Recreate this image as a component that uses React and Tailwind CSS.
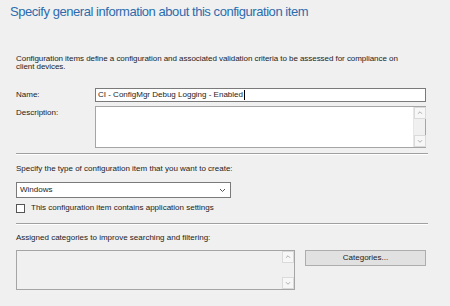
export default function App() {
  return (
    <div className="w-[450px] h-[306px] overflow-hidden bg-[#f0f0f0] font-['Liberation_Sans',Arial,sans-serif] text-[#1c1c1c]">
      {/* Header */}
      <div className="pl-[10px] pt-[4px] h-[52px]">
        <h1 className="text-[13px] leading-[16px] text-[#2c6cae] tracking-[-0.45px]">
          Specify general information about this configuration item
        </h1>
      </div>

      <div className="pl-[16px] pr-[24px]">
        <p className="text-[8px] leading-[8px] tracking-[-0.05px] pt-[3px]">
          Configuration items define a configuration and associated validation criteria to be assessed for compliance on
          <br />
          client devices.
        </p>

        {/* Name */}
        <div className="flex items-center mt-[17px] h-[14px]">
          <span className="w-[79px] text-[8px]">Name:</span>
          <div className="flex-1 h-[14px] bg-white border border-[#7a7a7a] flex items-center px-[2px] text-[8px]">
            CI - ConfigMgr Debug Logging - Enabled
            <span className="w-px h-[10px] bg-black ml-[1px]" />
          </div>
        </div>

        {/* Description */}
        <div className="flex items-start mt-[4px]">
          <span className="w-[79px] text-[8px] pt-[1px]">Description:</span>
          <div className="flex-1 h-[42px] bg-white border border-[#a5a5a5] flex justify-end">
            <div className="w-[12px] h-full bg-[#f0f0f0] border-l border-[#e6e6e6] flex flex-col justify-between items-center">
              <svg width="12" height="12" viewBox="0 0 12 12" className="border border-[#dadada] bg-[#f7f7f7]">
                <path d="M3.5 7 L6 4.5 L8.5 7" fill="none" stroke="#8a8a8a" strokeWidth="0.8" />
              </svg>
              <svg width="12" height="12" viewBox="0 0 12 12" className="border border-[#dadada] bg-[#f7f7f7]">
                <path d="M3.5 5 L6 7.5 L8.5 5" fill="none" stroke="#8a8a8a" strokeWidth="0.8" />
              </svg>
            </div>
          </div>
        </div>

        <div className="mt-[5px] mr-[-2px] border-t border-[#a0a0a0] border-b border-b-white" />

        {/* Type */}
        <p className="text-[8px] leading-[8px] mt-[10px]">Specify the type of configuration item that you want to create:</p>
        <div className="mt-[9px] w-[215px] h-[16px] bg-white border border-[#7a7a7a] flex items-center justify-between pl-[3px] pr-[4px] text-[8px]">
          <span>Windows</span>
          <svg width="7" height="5" viewBox="0 0 7 5">
            <path d="M1 1 L3.5 3.5 L6 1" fill="none" stroke="#555" strokeWidth="1" />
          </svg>
        </div>
        <div className="flex items-center mt-[5px] h-[10px]">
          <div className="w-[9px] h-[9px] bg-white border border-[#555]" />
          <span className="ml-[6px] text-[8px]">This configuration item contains application settings</span>
        </div>

        <div className="mt-[10px] mr-[-2px] border-t border-[#a0a0a0] border-b border-b-white" />

        {/* Categories */}
        <p className="text-[8px] leading-[8px] mt-[9px]">Assigned categories to improve searching and filtering:</p>
        <div className="flex items-start mt-[8px]">
          <div className="w-[279px] h-[40px] bg-[#f0f0f0] border border-[#a5a5a5] flex justify-end">
            <div className="w-[12px] h-full bg-[#f0f0f0] flex flex-col justify-between">
              <svg width="12" height="12" viewBox="0 0 12 12" className="border border-[#dadada] bg-[#f7f7f7]">
                <path d="M3.5 7 L6 4.5 L8.5 7" fill="none" stroke="#8a8a8a" strokeWidth="0.8" />
              </svg>
              <svg width="12" height="12" viewBox="0 0 12 12" className="border border-[#dadada] bg-[#f7f7f7]">
                <path d="M3.5 5 L6 7.5 L8.5 5" fill="none" stroke="#8a8a8a" strokeWidth="0.8" />
              </svg>
            </div>
          </div>
          <button className="ml-[10px] flex-1 h-[16px] bg-[#e1e1e1] border border-[#adadad] text-[8px] leading-[14px] text-center">
            Categories...
          </button>
        </div>
      </div>
    </div>
  );
}
